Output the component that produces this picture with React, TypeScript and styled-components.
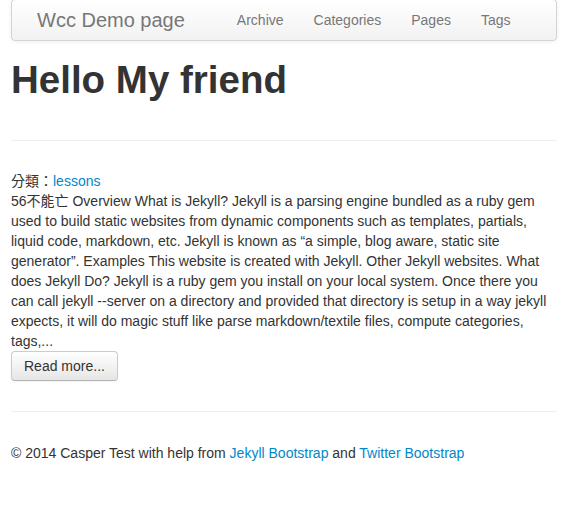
import React from 'react';
import styled, { createGlobalStyle } from 'styled-components';

const GlobalStyle = createGlobalStyle`
  body {
    margin: 0;
    background: #fff;
    color: #333;
    font-family: "Liberation Sans", Arial, "Noto Sans CJK TC", sans-serif;
    font-size: 14px;
    line-height: 20px;
  }
  a {
    color: #0088cc;
    text-decoration: none;
  }
`;

const Container = styled.div`
  width: 546px;
  padding-left: 11px;
`;

const Navbar = styled.div`
  display: flex;
  align-items: center;
  height: 40px;
  margin-top: -1px;
  margin-bottom: 19px;
  border: 1px solid #d4d4d4;
  border-radius: 4px;
  background: linear-gradient(to bottom, #ffffff, #f2f2f2);
  box-shadow: 0 1px 4px rgba(0, 0, 0, 0.065);
`;

const Brand = styled.a`
  padding: 10px 20px 10px 25px;
  font-size: 20px;
  line-height: 20px;
  color: #777;
`;

const Nav = styled.ul`
  display: flex;
  margin: 0 0 0 17px;
  padding: 0;
  list-style: none;
`;

const NavLink = styled.a`
  display: block;
  padding: 10px 15px;
  color: #777;
  line-height: 20px;
`;

const Title = styled.h1`
  margin: 0 0 40px;
  font-size: 38.5px;
  line-height: 40px;
  font-weight: bold;
  color: #333;
`;

const Rule = styled.hr<{ $after?: number }>`
  margin: 20px 0 ${(p) => p.$after ?? 20}px;
  border: 0;
  border-top: 1px solid #eeeeee;
  border-bottom: 1px solid #ffffff;
`;

const Post = styled.div`
  margin-bottom: 30px;
`;

const Category = styled.div``;

const Excerpt = styled.p`
  margin: 0 -4px 0 0;
`;

const Button = styled.a`
  display: inline-block;
  padding: 4px 12px;
  font-size: 14px;
  line-height: 20px;
  color: #333;
  border: 1px solid #cccccc;
  border-bottom-color: #b3b3b3;
  border-radius: 4px;
  background: linear-gradient(to bottom, #ffffff, #e6e6e6);
  box-shadow: inset 0 1px 0 rgba(255, 255, 255, 0.2), 0 1px 2px rgba(0, 0, 0, 0.05);
`;

const Footer = styled.footer`
  margin: 0;
`;

const links = ['Archive', 'Categories', 'Pages', 'Tags'];

export default function App() {
  return (
    <>
      <GlobalStyle />
      <Container>
        <Navbar>
          <Brand href="#">Wcc Demo page</Brand>
          <Nav>
            {links.map((l) => (
              <li key={l}>
                <NavLink href="#">{l}</NavLink>
              </li>
            ))}
          </Nav>
        </Navbar>
        <Title>Hello My friend</Title>
        <Rule $after={29} />
        <Post>
          <Category>
            分類：<a href="#">lessons</a>
          </Category>
          <Excerpt>
            56不能亡 Overview What is Jekyll? Jekyll is a parsing engine bundled as a ruby gem used
            to build static websites from dynamic components such as templates, partials, liquid
            code, markdown, etc. Jekyll is known as “a simple, blog aware, static site generator”.
            Examples This website is created with Jekyll. Other Jekyll websites. What does Jekyll
            Do? Jekyll is a ruby gem you install on your local system. Once there you can call
            jekyll --server on a directory and provided that directory is setup in a way jekyll
            expects, it will do magic stuff like parse markdown/textile files, compute categories,
            tags,...
          </Excerpt>
          <Button href="#">Read more...</Button>
        </Post>
        <Rule $after={30} />
        <Footer>
          © 2014 Casper Test with help from <a href="#">Jekyll Bootstrap</a> and{' '}
          <a href="#">Twitter Bootstrap</a>
        </Footer>
      </Container>
    </>
  );
}
